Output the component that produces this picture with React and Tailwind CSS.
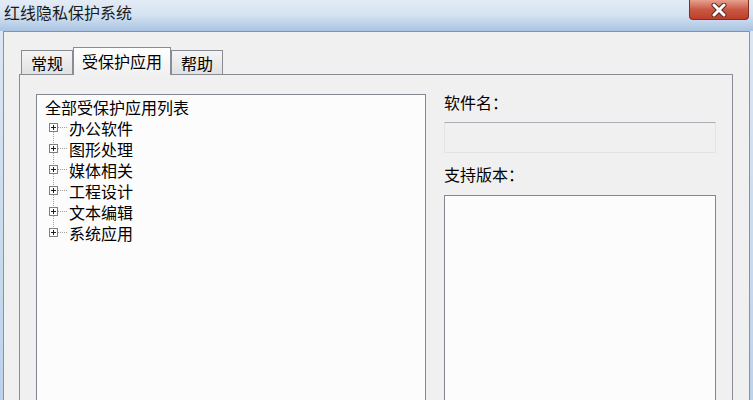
import React from 'react';

const apps = ['办公软件', '图形处理', '媒体相关', '工程设计', '文本编辑', '系统应用'];

// expander box plus the dotted tree lines
const TreeLines = ({ first, last }) => (
  <svg width="24" height="21" viewBox="0 0 24 21" className="shrink-0">
    {!first && <line x1="8.5" y1="0" x2="8.5" y2="6" stroke="#a0a0a0" strokeDasharray="1 1" />}
    {!last && <line x1="8.5" y1="15" x2="8.5" y2="21" stroke="#a0a0a0" strokeDasharray="1 1" />}
    <line x1="13" y1="10.5" x2="22" y2="10.5" stroke="#a0a0a0" strokeDasharray="1 1" />
    <rect x="4.5" y="6.5" width="8" height="8" fill="#fdfdfd" stroke="#808080" />
    <line x1="6" y1="10.5" x2="11" y2="10.5" stroke="#1f1f1f" />
    <line x1="8.5" y1="8" x2="8.5" y2="13" stroke="#1f1f1f" />
  </svg>
);

const Tab = ({ label, active }) =>
  active ? (
    <div className="relative z-10 -mb-px flex h-[28px] items-center border border-b-0 border-[#898c95] bg-gradient-to-b from-[#ffffff] to-[#f0f0f0] px-[8px] pb-[2px] text-[16px] leading-none text-black">
      {label}
    </div>
  ) : (
    <div className="flex h-[24px] items-center border border-b-0 border-[#898c95] bg-gradient-to-b from-[#f4f4f4] to-[#e1e1e1] px-[9px] text-[16px] leading-none text-black">
      {label}
    </div>
  );

export default function App() {
  return (
    <div className="h-[400px] w-[753px] overflow-hidden bg-gradient-to-b from-[#dde8f4] to-[#bcd2ea] font-[family-name:'Noto_Sans_CJK_SC',sans-serif] text-black">
      {/* title bar */}
      <div className="flex h-[31px] items-start justify-between bg-gradient-to-b from-[#e3ecf6] via-[#d3e2f2] to-[#a9c3e2]">
        <div className="pl-[4px] pt-[3px] text-[16px] leading-[18px] text-[#1a1a1a]">红线隐私保护系统</div>
        <div className="mr-[4px] flex h-[20px] w-[60px] items-center justify-center rounded-b-[4px] border border-t-0 border-[#7b2f25] bg-gradient-to-b from-[#e8a08e] via-[#c85a44] to-[#c03c2a]">
          <svg width="16" height="14" viewBox="0 0 16 14">
            <path d="M3 2 L13 12 M13 2 L3 12" stroke="#5a2a22" strokeWidth="5" strokeLinecap="round" />
            <path d="M3 2 L13 12 M13 2 L3 12" stroke="#ffffff" strokeWidth="3" strokeLinecap="round" />
          </svg>
        </div>
      </div>

      {/* client area */}
      <div className="mx-[3px] h-[400px] border border-[#8394aa] bg-[#f0f0f0] pl-[15px]">
        <div className="ml-[2px] mt-[15px] flex h-[27px] items-end">
          <Tab label="常规" />
          <Tab label="受保护应用" active />
          <Tab label="帮助" />
        </div>

        <div className="flex h-[400px] w-[714px] gap-[18px] border border-[#898c95] bg-[#f0f0f0] pl-[16px] pt-[19px]">
          {/* tree */}
          <div className="h-[320px] w-[390px] shrink-0 border border-[#828790] bg-[#fcfcfc] pt-[1px]">
            <div className="flex h-[21px] items-center pl-[8px] text-[16px] leading-none">全部受保护应用列表</div>
            {apps.map((name, i) => (
              <div key={name} className="flex h-[21px] items-center pl-[8px] text-[16px] leading-none">
                <TreeLines first={i === 0} last={i === apps.length - 1} />
                <span>{name}</span>
              </div>
            ))}
          </div>

          {/* details */}
          <div className="flex w-[272px] flex-col">
            <div className="text-[16px] leading-[16px]">软件名：</div>
            <div className="mt-[12px] h-[31px] border border-[#e2e3e5] border-t-[#acb0b6] bg-[#f0f0f0]" />
            <div className="mt-[13px] text-[16px] leading-[16px]">支持版本：</div>
            <div className="mt-[13px] h-[260px] border border-[#828790] bg-[#fcfcfc]" />
          </div>
        </div>
      </div>
    </div>
  );
}
